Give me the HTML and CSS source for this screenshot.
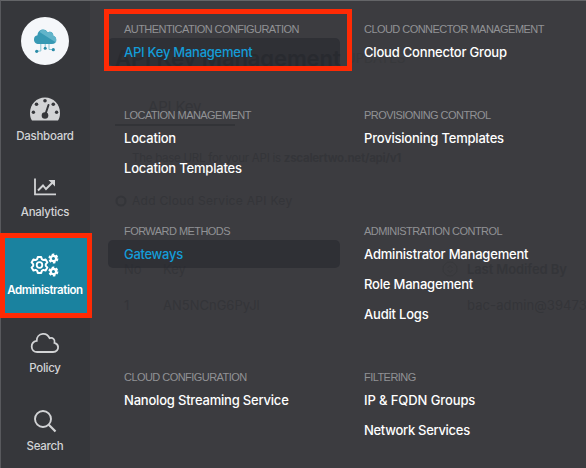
FILE: index.html
```html
<!DOCTYPE html>
<html lang="en">
<head>
<meta charset="utf-8">
<title>API Key Management</title>
<link rel="stylesheet" href="styles.css">
</head>
<body>
<div class="app">
  <nav class="sidebar">
    <div class="logo">
      <svg width="24" height="26" viewBox="0 0 24 26">
        <path d="M6 16C2.500 16 1 14 1 11.500C1 9 2.300 7.500 4.500 7.200C4.600 4 7 1.500 10 1.500C12.300 1.500 13.800 2.700 14.500 4.200C18 2.500 20.500 5 20.300 7.700C22.400 8.300 23.200 10 23.200 12C23.200 14.500 21.600 16 19 16Z" fill="#3799b4"/>
        <path d="M6.500 4L23 14.500C24 10 22.500 8.300 20.300 7.700C20.500 5 18 2.500 14.500 4.200C12.500 1 8.500.7 6.500 4Z" fill="#61b4ca"/>
        <path d="M7.800 16V23H4M12.200 16V19M16 16V21.500H19" fill="none" stroke="#86c5d5" stroke-width="1"/>
        <g fill="#2b8ca8"><circle cx="3.700" cy="23.300" r="1.600"/><circle cx="12.200" cy="20.300" r="1.500"/><circle cx="20.300" cy="21.700" r="1.600"/></g>
      </svg>
    </div>
    <a class="nav-item dash">
      <svg width="30" height="24" viewBox="0 0 30 24">
        <path d="M2 23.500C.7 21.500 0 19 0 16C0 7 6.500 .5 15 .5S30 7 30 16C30 19 29.300 21.500 28 23.500Z" fill="#d2d3d5"/>
        <g fill="#36373b"><circle cx="15" cy="3.700" r="1.800"/><circle cx="6.500" cy="7.200" r="1.800"/><circle cx="3.400" cy="15.300" r="1.700"/><circle cx="23.300" cy="7.200" r="1.800"/><circle cx="26.600" cy="15.300" r="1.700"/><circle cx="15" cy="18.500" r="3.300"/></g>
        <path d="M15.500 17L18.500 8" stroke="#36373b" stroke-width="2" stroke-linecap="round"/>
      </svg>
      <span>Dashboard</span>
    </a>
    <a class="nav-item ana">
      <svg width="24" height="24" viewBox="0 0 24 24" fill="none" stroke="#d2d3d5">
        <path d="M2 3.500V19.300H23" stroke-width="1.800"/>
        <path d="M5 15.500L10 10.500L13 14L20 7" stroke-width="1.900"/>
        <path d="M15.500 5H22V11.500Z" fill="#d2d3d5" stroke="none"/>
      </svg>
      <span>Analytics</span>
    </a>
    <a class="nav-item admin">
      <svg width="30" height="24" viewBox="0 0 30 24" fill="none" stroke="#fff" stroke-linejoin="round">
        <path d="M7.800 3.500H11.200L11.800 5.700L13.400 6.600L15.600 5.900L17.400 8.900L15.800 10.600V12.400L17.400 14.100L15.600 17.100L13.400 16.400L11.800 17.300L11.200 19.500H7.800L7.200 17.300L5.600 16.400L3.400 17.100L1.600 14.100L3.200 12.400V10.600L1.600 8.900L3.400 5.900L5.600 6.600L7.200 5.700Z" transform="translate(0 .5)" stroke-width="2"/>
        <circle cx="9.500" cy="12" r="2.800" stroke-width="1.800"/>
        <circle cx="23.400" cy="5.500" r="2.700" stroke-width="2.200"/>
        <circle cx="23.400" cy="18.500" r="2.700" stroke-width="2.200"/>
        <circle cx="23.400" cy="5.500" r="4.100" stroke-width="1.800" stroke-dasharray="2.494 1.800"/>
        <circle cx="23.400" cy="18.500" r="4.100" stroke-width="1.800" stroke-dasharray="2.494 1.800"/>
      </svg>
      <span>Administration</span>
    </a>
    <a class="nav-item pol">
      <svg width="30" height="24" viewBox="0 0 30 24" fill="none" stroke="#d2d3d5" stroke-width="1.800">
        <path d="M7.200 21H23C26.500 21 28.400 18.500 28.100 15.800C27.900 13.600 26.400 12.300 24.500 11.800C25.500 8.500 22.500 6 19.600 7.200C18.300 4.300 15.800 2.600 12.800 2.900C9.200 3.200 6.600 6 6.700 9.900C3.600 10.500 1.600 12.700 1.700 15.700C1.800 18.800 4 21 7.200 21Z"/>
      </svg>
      <span>Policy</span>
    </a>
    <a class="nav-item sea">
      <svg width="24" height="24" viewBox="0 0 24 24" fill="none" stroke="#d2d3d5" stroke-width="1.900">
        <circle cx="10" cy="10" r="8"/><path d="M15.800 15.800L22.500 22.500" stroke-width="2.200"/>
      </svg>
      <span>Search</span>
    </a>
  </nav>
  <main class="menu">
    <section><h2>AUTHENTICATION CONFIGURATION</h2><a class="link active api">API Key Management</a></section>
    <section><h2>CLOUD CONNECTOR MANAGEMENT</h2><a class="link">Cloud Connector Group</a></section>
    <section><h2>LOCATION MANAGEMENT</h2><a class="link">Location</a><a class="link">Location Templates</a></section>
    <section><h2>PROVISIONING CONTROL</h2><a class="link">Provisioning Templates</a></section>
    <section><h2>FORWARD METHODS</h2><a class="link active tight">Gateways</a></section>
    <section><h2>ADMINISTRATION CONTROL</h2><a class="link">Administrator Management</a><a class="link">Role Management</a><a class="link">Audit Logs</a></section>
    <section><h2>CLOUD CONFIGURATION</h2><a class="link">Nanolog Streaming Service</a></section>
    <section><h2>FILTERING</h2><a class="link wide">IP &amp; FQDN Groups</a><a class="link tight">Network Services</a></section>
  </main>
  <div class="under">
    <div class="page-head"><strong>API Key Management</strong><span>UPDATES</span></div>
    <div class="tab">API Key</div>
    <div class="base">The base URL for your API is <b>zscalertwo.net/api/v1</b></div>
    <div class="add"><svg width="12" height="12" viewBox="0 0 12 12"><circle cx="6" cy="6" r="4.500" fill="none" stroke="#343539" stroke-width="2"/></svg>Add Cloud Service API Key</div>
    <div class="row cols"><span>No</span><span>Key</span><svg width="16" height="16" viewBox="0 0 16 16" fill="none" stroke="#37383b"><circle cx="8" cy="8" r="7"/><path d="M5.500 7L8 4.500L10.500 7M5.500 9L8 11.500L10.500 9"/></svg><span class="mod">Last Modifed By</span></div>
    <div class="row"><span>1</span><span>AN5NCnG6PyJl</span><i></i><span class="user">bac-admin@394732</span></div>
  </div>
  <div class="mark mark-api"></div>
  <div class="mark mark-admin"></div>
</div>
</body>
</html>
```
FILE: styles.css
```css
* { box-sizing: border-box; }
body { margin: 0; overflow: hidden; background: #3c3c40; font-family: Inter, sans-serif; }
.app { position: relative; display: flex; width: 586px; height: 468px; overflow: hidden; isolation: isolate; }
.app::before { content: ""; position: absolute; inset: 0; border-top: 1px solid #646568; border-left: 1px solid #58595d; z-index: 3; }
.sidebar { width: 90px; height: 468px; flex: none; background: #36373b; padding-top: 17px; }
.logo { width: 48px; height: 48px; margin: 0 0 15px 21px; border-radius: 50%; background: #f5f7fa; display: flex; align-items: center; justify-content: center; }
.nav-item { height: 78px; display: flex; flex-direction: column; align-items: center; padding-top: 17px; color: #d2d3d5; font-size: 11.500px; font-weight: 500; line-height: 16px; letter-spacing: -.3px; gap: 5px; white-space: nowrap; }
.nav-item svg { flex: none; }
.nav-item.dash { gap: 7px; }
.nav-item.ana { height: 76px; }
.nav-item.admin { height: 80px; padding-top: 19px; color: #fff; background: #1a829f; font-weight: 600; letter-spacing: -.43px; }
.menu { position: relative; z-index: 1; display: grid; grid-template-columns: 240px 240px; align-content: start; row-gap: 40px; padding: 21px 0 0 18px; }
section { display: flex; flex-direction: column; }
h2 { margin: 0 0 0 16px; font: 400 11px/16px "Liberation Sans", sans-serif; letter-spacing: -.55px; color: #919295; white-space: nowrap; }
.link { display: flex; align-items: center; width: 232px; height: 28px; margin: 1px 0; padding-left: 16px; border-radius: 5px; color: #fff; font-size: 13px; font-weight: 500; line-height: 16px; letter-spacing: -.2px; white-space: nowrap; }
.link.tight { letter-spacing: -.3px; }
.link.api { letter-spacing: -.25px; }
.link.wide { letter-spacing: -.1px; }
.active { background: rgba(38, 40, 46, .6); color: #149cd8; }
.under { position: absolute; left: 115px; top: 0; width: 471px; height: 468px; z-index: 0; padding-top: 46px; color: #343539; font-size: 13px; line-height: 20px; white-space: nowrap; overflow: hidden; pointer-events: none; }
.page-head { display: flex; align-items: center; gap: 5px; height: 24px; font-size: 13px; color: #37383b; }
.page-head strong { width: 226px; font-size: 22px; font-weight: 600; letter-spacing: -.1px; color: #2c2d31; }
.tab { width: 120px; height: 31px; margin-top: 25px; padding-left: 33px; line-height: 24px; font-size: 15px; letter-spacing: -.2px; border-bottom: 2px solid #323337; }
.base { margin: 22px 0 0 17px; font-size: 11.500px; letter-spacing: -.25px; }
.add { display: flex; align-items: center; gap: 5px; margin-top: 23px; font-size: 12px; letter-spacing: .3px; }
.row { display: grid; grid-template-columns: 39px 272px 32px 150px; align-items: center; margin: 16px 0 0 9px; }
.cols { margin-top: 48px; }
.cols svg { margin-left: 7px; }
.mod { font-weight: 600; letter-spacing: -.1px; }
.user { letter-spacing: .1px; }
.mark { position: absolute; border: 5px solid #ff2a04; z-index: 4; }
.mark-api { left: 104px; top: 9px; width: 248px; height: 62px; }
.mark-admin { left: 0; top: 233px; width: 92px; height: 85px; }
```
